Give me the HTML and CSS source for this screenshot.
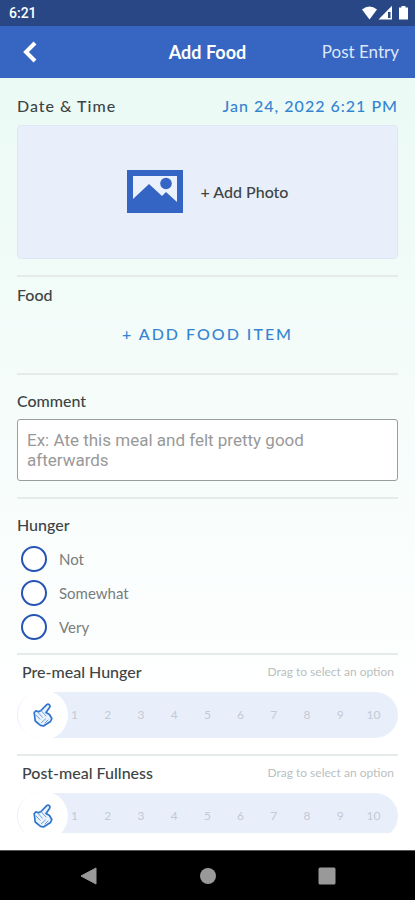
FILE: index.html
```html
<!DOCTYPE html>
<html lang="en">
<head>
<meta charset="utf-8">
<meta name="viewport" content="width=device-width, initial-scale=1">
<title>Add Food</title>
<link rel="stylesheet" href="styles.css">
</head>
<body>
<svg width="0" height="0" class="defs" aria-hidden="true">
  <symbol id="hand" viewBox="0 0 20 24">
    <path d="M8 7.500 13.500 1.800C15.500.2 17.800 2.300 16.500 4.500L13 9.500 16.500 11.500 18.800 15.500 17.500 18.500 10.500 23 7.500 22.300 2.200 18 1.200 9.500 3 7.800 5.500 8.800Z" fill="#eaf2fc" stroke="#2f74cf" stroke-width="1.700" stroke-linejoin="round"/>
    <path d="M8 7.500l5 5.500M5 9.500l4.500 4.800M3 12l4 4.200M12.500 16l-4 3.500M15 17l-3 3" fill="none" stroke="#6a9fe0" stroke-width="1" stroke-linecap="round"/>
  </symbol>
</svg>
<div class="status">
  <span>6:21</span>
  <svg class="status-icons" width="48" height="16" viewBox="0 0 48 16" aria-hidden="true">
    <path d="M1 4.500Q8.500-1.500 16 4.500L8.500 14.500Z" fill="#fff"/>
    <path fill-rule="evenodd" d="M31 .8V14.500H17.500ZM27 7V13H29.500V7Z" fill="#fff"/>
    <path d="M40.500 1h4v1.500H47V14.500H38V2.500h2.500Z" fill="#fff"/>
  </svg>
</div>
<header class="header">
  <button class="back" type="button" aria-label="Back"><svg width="14" height="22" viewBox="0 0 14 22"><path d="M12 2 3 11l9 9" fill="none" stroke="#fff" stroke-width="4"/></svg></button>
  <h1>Add Food</h1>
  <button class="post" type="button">Post Entry</button>
</header>
<main class="content">
  <div class="row date-row">
    <span class="label">Date &amp; Time</span>
    <button class="date" type="button">Jan 24, 2022 6:21 PM</button>
  </div>
  <button class="photo" type="button">
    <svg width="56" height="43" viewBox="0 0 56 43" aria-hidden="true">
      <path d="M0 0h56v43H0z" fill="#3565c4"/>
      <path d="M6 6h44v26L39 22l-4 4L22 14 6 29z" fill="#eaf1fc"/>
      <circle cx="39" cy="13.500" r="5.800" fill="#3565c4"/>
    </svg>
    <span>+ Add Photo</span>
  </button>
  <section class="section food">
    <h2 class="label">Food</h2>
    <button class="add-item" type="button">+ ADD FOOD ITEM</button>
  </section>
  <section class="section comment">
    <label class="label" for="comment">Comment</label>
    <textarea id="comment" rows="2" placeholder="Ex: Ate this meal and felt pretty good afterwards"></textarea>
  </section>
  <fieldset class="section hunger">
    <legend class="label">Hunger</legend>
    <label class="option"><input type="radio" name="hunger">Not</label>
    <label class="option"><input type="radio" name="hunger">Somewhat</label>
    <label class="option"><input type="radio" name="hunger">Very</label>
  </fieldset>
  <section class="section scale">
    <div class="row scale-head"><label class="label" for="pre">Pre-meal Hunger</label><span class="hint">Drag to select an option</span></div>
    <div class="track">
      <div class="ticks"><span>1</span><span>2</span><span>3</span><span>4</span><span>5</span><span>6</span><span>7</span><span>8</span><span>9</span><span>10</span></div>
      <input id="pre" type="range" min="0" max="10" value="0">
      <svg class="hand" width="20" height="24"><use href="#hand"/></svg>
    </div>
  </section>
  <section class="section scale">
    <div class="row scale-head"><label class="label" for="fullness">Post-meal Fullness</label><span class="hint">Drag to select an option</span></div>
    <div class="track">
      <div class="ticks"><span>1</span><span>2</span><span>3</span><span>4</span><span>5</span><span>6</span><span>7</span><span>8</span><span>9</span><span>10</span></div>
      <input id="fullness" type="range" min="0" max="10" value="0">
      <svg class="hand" width="20" height="24"><use href="#hand"/></svg>
    </div>
  </section>
</main>
<nav class="system">
  <button type="button" aria-label="Back"><svg width="18" height="18" viewBox="0 0 18 18"><path d="M16 1v16L1 9z" fill="#999" stroke="#999" stroke-linejoin="round"/></svg></button>
  <button type="button" aria-label="Home"><svg width="18" height="18" viewBox="0 0 18 18"><circle cx="9" cy="9" r="8" fill="#999"/></svg></button>
  <button type="button" aria-label="Recents"><svg width="18" height="18" viewBox="0 0 18 18"><rect x=".5" y=".5" width="17" height="17" rx="1.500" fill="#999"/></svg></button>
</nav>
</body>
</html>
```
FILE: styles.css
```css
* { box-sizing: border-box; }
body {
  margin: 0;
  height: 100vh;
  display: flex;
  flex-direction: column;
  font-family: Lato, sans-serif;
  color: #3d4444;
  background: linear-gradient(#ebfaf5 78px, #f8fdfc 500px, #fff 720px);
}
button { border: 0; padding: 0; background: none; font: inherit; color: inherit; }
.defs { position: absolute; }

.status {
  flex: none;
  height: 26px;
  padding: 0 6px 0 9px;
  display: flex;
  align-items: center;
  justify-content: space-between;
  background: #284784;
  color: #fff;
  font: 500 14px/18px Roboto, sans-serif;
}
.header {
  flex: none;
  height: 52px;
  padding: 0 16px;
  display: grid;
  grid-template-columns: 1fr auto 1fr;
  align-items: center;
  background: #3766c2;
  color: #fff;
}
.header h1 { margin: 0; font-size: 18px; line-height: 24px; font-weight: 700; }
.back { justify-self: start; display: flex; padding: 0 7px; }
.post { justify-self: end; font-size: 17px; line-height: 24px; color: #dce7fb; }

.content {
  flex: 1;
  min-height: 0;
  margin-bottom: 17px;
  padding: 18px 17px 0;
  overflow: hidden;
}
.row { display: flex; justify-content: space-between; align-items: center; }
.label { display: block; margin: 0; padding: 0; font-size: 16px; line-height: 20px; font-weight: 500; }
.date-row { margin-bottom: 9px; }
.date-row .label { letter-spacing: 1px; }
.date { font-size: 16px; line-height: 20px; font-weight: 500; letter-spacing: 1px; color: #3484d3; }
.photo {
  width: 100%;
  height: 134px;
  padding-bottom: 2px;
  display: flex;
  align-items: center;
  justify-content: center;
  gap: 18px;
  border: 1px solid #dde7f8;
  border-radius: 4px;
  background: #e8effb;
  font-size: 16px;
  font-weight: 500;
}

.section { margin: 16px 0 0; border: 0; border-top: 2px solid #e5eaea; padding: 0; }
.food { padding-top: 8px; }
.add-item {
  display: block;
  margin: 19px auto 0;
  padding-bottom: 13px;
  font-size: 16px;
  line-height: 20px;
  font-weight: 500;
  letter-spacing: 2px;
  color: #3484d3;
}
.comment { padding-top: 16px; }
.comment textarea {
  display: block;
  width: 100%;
  margin-top: 8px;
  padding: 10px 9px;
  border: 1px solid #999d9d;
  border-radius: 3px;
  background: #fff;
  font: 17px/20px Roboto, sans-serif;
  resize: none;
  overflow: hidden;
}
.comment textarea::placeholder { color: #999; opacity: 1; }
.hunger { padding-top: 16px; min-width: 0; }
.hunger legend { float: left; width: 100%; margin-bottom: 7px; }
.option {
  clear: both;
  display: flex;
  align-items: center;
  gap: 12px;
  height: 34px;
  padding-left: 4px;
  font-size: 15px;
  color: #777d7d;
}
.option input {
  appearance: none;
  width: 26px;
  height: 26px;
  margin: 0;
  border: 2px solid #2554b5;
  border-radius: 50%;
  background: #fff;
}
.option input:checked { background: radial-gradient(#2554b5 50%, #fff 55%); }

.hunger + .scale { margin-top: 9px; }
.scale { padding-top: 7px; }
.scale-head { margin-bottom: 10px; padding: 0 4px 0 5px; }
.hint { font-size: 12px; line-height: 16px; color: #babfbf; }
.track {
  position: relative;
  height: 46px;
  border-radius: 23px;
  background: #e8effb;
  overflow: hidden;
}
.ticks {
  height: 100%;
  padding: 0 8px 2px 41px;
  display: grid;
  grid-template-columns: repeat(10, 1fr);
  align-items: center;
  text-align: center;
  font-size: 12px;
  color: #c3cad4;
}
.track input {
  position: absolute;
  inset: 0 0 0 1px;
  width: 100%;
  height: 100%;
  margin: 0;
  appearance: none;
  background: none;
}
.track input::-webkit-slider-thumb {
  appearance: none;
  width: 50px;
  height: 50px;
  border-radius: 50%;
  background: #fff;
}
.hand { position: absolute; left: 16px; top: 11px; pointer-events: none; }

.system {
  flex: none;
  height: 50px;
  display: flex;
  align-items: center;
  justify-content: center;
  gap: 101px;
  background: #000;
  border-top: 1px solid #555;
}
.system button { display: flex; }
```
